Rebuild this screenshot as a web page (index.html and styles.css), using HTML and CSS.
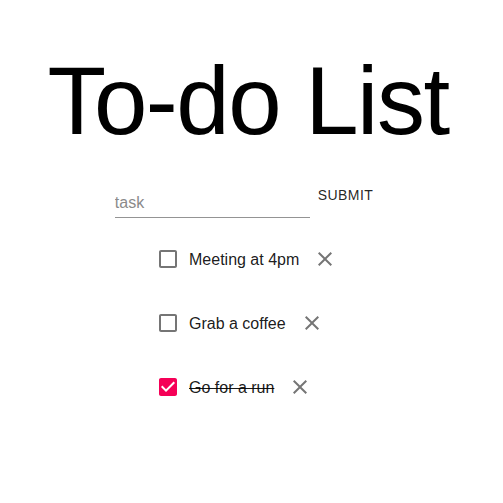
FILE: index.html
```html
<!DOCTYPE html>
<html lang="en">
<head>
<meta charset="utf-8">
<title>To-do List</title>
<link rel="stylesheet" href="styles.css">
</head>
<body>
<div class="app">
  <h1 class="title">To-do List</h1>
  <form class="form-row">
    <div class="field">
      <input class="task-input" type="text" placeholder="task">
    </div>
    <button class="submit" type="button">Submit</button>
  </form>
  <ul class="list">
    <li class="item">
      <span class="checkbox">
        <svg viewBox="0 0 24 24" width="24" height="24"><path fill="currentColor" d="M19 5v14H5V5h14m0-2H5c-1.1 0-2 .9-2 2v14c0 1.1.9 2 2 2h14c1.1 0 2-.9 2-2V5c0-1.1-.9-2-2-2z"/></svg>
      </span>
      <span class="label">Meeting at 4pm</span>
      <span class="remove">
        <svg viewBox="0 0 24 24" width="24" height="24"><path fill="currentColor" d="M19 6.41L17.59 5 12 10.59 6.41 5 5 6.41 10.59 12 5 17.59 6.41 19 12 13.41 17.59 19 19 17.59 13.41 12z"/></svg>
      </span>
    </li>
    <li class="item">
      <span class="checkbox">
        <svg viewBox="0 0 24 24" width="24" height="24"><path fill="currentColor" d="M19 5v14H5V5h14m0-2H5c-1.1 0-2 .9-2 2v14c0 1.1.9 2 2 2h14c1.1 0 2-.9 2-2V5c0-1.1-.9-2-2-2z"/></svg>
      </span>
      <span class="label">Grab a coffee</span>
      <span class="remove">
        <svg viewBox="0 0 24 24" width="24" height="24"><path fill="currentColor" d="M19 6.41L17.59 5 12 10.59 6.41 5 5 6.41 10.59 12 5 17.59 6.41 19 12 13.41 17.59 19 19 17.59 13.41 12z"/></svg>
      </span>
    </li>
    <li class="item">
      <span class="checkbox checked">
        <svg viewBox="0 0 24 24" width="24" height="24"><path fill="currentColor" d="M19 3H5c-1.11 0-2 .9-2 2v14c0 1.1.89 2 2 2h14c1.11 0 2-.9 2-2V5c0-1.1-.89-2-2-2zm-9 14l-5-5 1.410-1.41L10 14.17l7.59-7.59L19 8l-9 9z"/></svg>
      </span>
      <span class="label done">Go for a run</span>
      <span class="remove">
        <svg viewBox="0 0 24 24" width="24" height="24"><path fill="currentColor" d="M19 6.41L17.59 5 12 10.59 6.41 5 5 6.41 10.59 12 5 17.59 6.41 19 12 13.41 17.59 19 19 17.59 13.41 12z"/></svg>
      </span>
    </li>
  </ul>
</div>
</body>
</html>
```

FILE: styles.css
```css
* { box-sizing: border-box; }

html, body {
  margin: 0;
  padding: 0;
  background: #fff;
}

body {
  font-family: "Liberation Sans", Arial, sans-serif;
  color: #000;
}

.app {
  display: flex;
  flex-direction: column;
  align-items: center;
}

.title {
  margin: 46px 0 21px;
  padding-right: 7px;
  font-size: 96px;
  line-height: 110px;
  font-weight: 400;
  letter-spacing: -1.5px;
  color: #000;
  text-align: center;
}

.form-row {
  display: flex;
  align-items: flex-start;
  margin: 0 7px 0 0;
}

.field {
  padding-top: 12px;
  width: 195px;
}

.task-input {
  display: block;
  width: 100%;
  height: 29px;
  padding: 4px 0 5px;
  border: 0;
  border-bottom: 1px solid #949494;
  outline: none;
  font-family: "Liberation Sans", Arial, sans-serif;
  font-size: 16px;
  line-height: 19px;
  color: rgba(0, 0, 0, 0.87);
  background: transparent;
}

.task-input::placeholder {
  color: #8a8a8a;
  opacity: 1;
}

.submit {
  display: block;
  height: 36px;
  padding: 6px 8px;
  border: 0;
  background: transparent;
  font-family: "Liberation Sans", Arial, sans-serif;
  font-size: 14px;
  line-height: 24px;
  letter-spacing: 0.4px;
  text-transform: uppercase;
  color: rgba(0, 0, 0, 0.87);
}

.list {
  list-style: none;
  margin: 9px 0 0;
  padding: 0;
  align-self: flex-start;
  margin-left: 147px;
}

.item {
  display: flex;
  align-items: center;
  height: 64px;
}

.checkbox {
  display: flex;
  align-items: center;
  justify-content: center;
  width: 42px;
  height: 42px;
  color: rgba(0, 0, 0, 0.54);
}

.checkbox.checked {
  color: #f50057;
}

.label {
  font-size: 16px;
  line-height: 24px;
  padding-top: 2px;
  color: rgba(0, 0, 0, 0.9);
}

.label.done {
  text-decoration: line-through;
}

.remove {
  display: flex;
  align-items: center;
  justify-content: center;
  width: 48px;
  height: 48px;
  margin-left: 2px;
  color: rgba(0, 0, 0, 0.54);
}
```
